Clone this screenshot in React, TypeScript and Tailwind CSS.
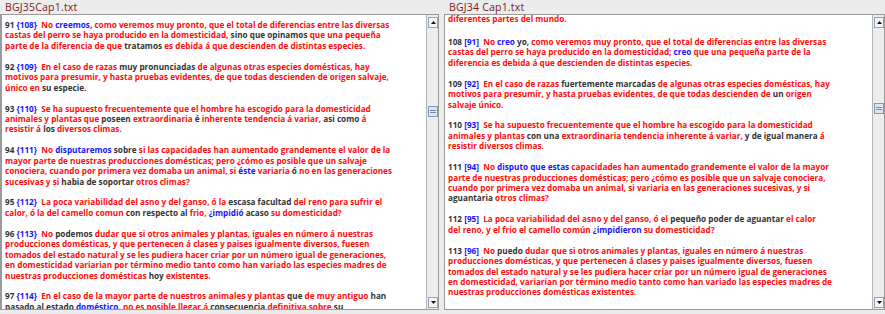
import React from 'react'

// segments separated by "|", first char of each = colour key
const COLORS: Record<string, string> = {
  r: 'text-[#ff0d0d]',
  b: 'text-[#1515ff]',
  d: 'text-[#333333]',
}

const LEFT_LINES = [
  'd91 |b{108}|d  |rNo |bcreemos,|r como veremos muy pronto, que el total de diferencias entre las diversas',
  'rcastas del perro se haya producido en la domesticidad,|d sino que opinamos|r que una pequeña',
  'rparte de la diferencia de que|d tratamos|r es debida á que descienden de distintas especies.',
  '',
  'd92 |b{109}|d  |rEn el caso de razas|d muy pronunciadas|r de algunas otras especies domésticas, hay',
  'rmotivos para presumir, y hasta pruebas evidentes, de que todas descienden de origen salvaje,',
  'rúnico en|d su especie.',
  '',
  'd93 |b{110}|d  |rSe ha supuesto frecuentemente que el hombre ha escogido para la domesticidad',
  'ranimales y plantas que|d poseen|r extraordinaria|d é|r inherente tendencia á variar,|d asi como|r á',
  'rresistir á|d los|r diversos climas.',
  '',
  'd94 |b{111}|d  |rNo|b disputaremos|d sobre|r si las capacidades han aumentado grandemente el valor de la',
  'rmayor parte de nuestras producciones domésticas; pero ¿cómo es posible que un salvaje',
  'rconociera, cuando por primera vez domaba un animal, si|b éste|r variaria|d ó|r no en las generaciones',
  'rsucesivas y si|d habia de soportar|r otros climas?',
  '',
  'd95 |b{112}|d  |rLa poca variabilidad del asno y del ganso, ó la|d escasa facultad|r del reno para sufrir el',
  'rcalor, ó la del camello comun|d con respecto al|r frio,|b ¿impidió|d acaso|r su domesticidad?',
  '',
  'd96 |b{113}|d  |rNo|d podemos|r dudar que si otros animales y plantas, iguales en número á nuestras',
  'rproducciones domésticas, y que pertenecen á clases y paises igualmente diversos, fuesen',
  'rtomados del estado natural y se les pudiera hacer criar por un número igual de generaciones,',
  'ren domesticidad variarian por término medio tanto como han variado las especies madres de',
  'rnuestras producciones domésticas|d hoy|r existentes.',
  '',
  'd97 |b{114}|d  |rEn el caso de la mayor parte de nuestros animales y plantas|d que|r de muy antiguo|d han',
  'dpasado al estado|b doméstico,|r no es posible llegar á|d consecuencia|r definitiva sobre|d su',
]

const RIGHT_LINES = [
  'rdiferentes partes del mundo.',
  '',
  'd108 |b[91]|d  |rNo|b creo|d yo,|r como veremos muy pronto, que el total de diferencias entre las diversas',
  'rcastas del perro se haya producido en la domesticidad;|b creo|r que una pequeña parte de la',
  'rdiferencia es debida á que descienden de distintas especies.',
  '',
  'd109 |b[92]|d  |rEn el caso de razas|d fuertemente marcadas|r de algunas otras especies domésticas, hay',
  'rmotivos para presumir, y hasta pruebas evidentes, de que todas descienden de|d un|r origen',
  'rsalvaje único.',
  '',
  'd110 |b[93]|d  |rSe ha supuesto frecuentemente que el hombre ha escogido para la domesticidad',
  'ranimales y plantas|d con una|r extraordinaria tendencia inherente á variar,|d y de igual manera|r á',
  'rresistir diversos climas.',
  '',
  'd111 |b[94]|d  |rNo|b disputo que estas|r capacidades han aumentado grandemente el valor de la mayor',
  'rparte de nuestras producciones domésticas; pero ¿cómo es posible que un salvaje conociera,',
  'rcuando por primera vez domaba un animal, si variaria en las generaciones sucesivas, y si',
  'daguantaria|r otros climas?',
  '',
  'd112 |b[95]|d  |rLa poca variabilidad del asno y del ganso, ó el|d pequeño poder de aguantar|r el calor',
  'rdel reno, y el frio el camello común|b ¿impidieron|r su domesticidad?',
  '',
  'd113 |b[96]|d  |rNo|d puedo|r dudar que si otros animales y plantas, iguales en número á nuestras',
  'rproducciones domésticas, y que pertenecen á clases y paises igualmente diversos, fuesen',
  'rtomados del estado natural y se les pudiera hacer criar por un número igual de generaciones',
  'ren domesticidad, variarian por término medio tanto como han variado las especies madres de',
  'rnuestras producciones domésticas existentes.',
  '',
  'd114 |b[97]|d  |rEn el caso de la mayor parte de nuestros animales y plantas',
]

function Line({ src, className = '' }: { src: string; className?: string }) {
  return (
    <div className={`h-[10.44px] leading-[10.44px] whitespace-pre ${className}`}>
      {src.split('|').filter(Boolean).map((seg, i) => (
        <span key={i} className={COLORS[seg[0]]}>{seg.slice(1)}</span>
      ))}
    </div>
  )
}

function Arrow({ down }: { down?: boolean }) {
  return (
    <div className="h-[11px] border border-[#8ea2c0] bg-[#f3f5f9] flex items-center justify-center">
      <svg width="5" height="3" viewBox="0 0 5 3">
        <path d={down ? 'M0 0H5L2.5 3Z' : 'M0 3H5L2.5 0Z'} fill="#111" />
      </svg>
    </div>
  )
}

function ScrollBar({ thumbTop }: { thumbTop: string }) {
  return (
    <div className="w-[12px] shrink-0 flex flex-col bg-[#ededed] border-l border-[#b3b3b3] pt-[2px] pb-[1px] pl-px">
      <Arrow />
      <div className={thumbTop} />
      {/* Thumb */}
      <div className="h-[11px] border border-[#7b95bb] bg-[#dce6f4] flex flex-col items-center justify-center gap-px">
        <div className="w-[6px] h-px bg-[#6e88b0]" />
        <div className="w-[6px] h-px bg-[#6e88b0]" />
      </div>
      <div className="flex-1" />
      <Arrow down />
    </div>
  )
}

function Pane({ title, lines, className, padTop, firstLine = '', thumbTop }: {
  title: string
  lines: string[]
  className: string
  padTop: string
  firstLine?: string
  thumbTop: string
}) {
  return (
    <div className={`flex flex-col pb-[4px] ${className}`}>
      <div className="h-[14px] leading-[14px] pl-[5px] text-[10.5px] tracking-[0.2px] text-[#7a1b1b]">{title}</div>
      <div className="flex-1 min-h-0 flex bg-white border border-[#9a9a9a]">
        <div className={`flex-1 min-w-0 overflow-hidden pl-[3px] text-[8.2px] font-bold ${padTop}`}>
          {lines.map((l, i) => <Line key={i} src={l} className={i === 0 ? firstLine : ''} />)}
        </div>
        <ScrollBar thumbTop={thumbTop} />
      </div>
    </div>
  )
}

export default function App() {
  return (
    <div className="w-[885px] h-[314px] bg-[#ececec] flex gap-[5px] overflow-hidden font-['Open_Sans',sans-serif]">
      <Pane
        title="BGJ35Cap1.txt"
        lines={LEFT_LINES}
        className="w-[439px] [&>div:nth-child(2)]:border-l-2"
        padTop="pt-[5px]"
        thumbTop="h-[78px]"
      />
      <Pane
        title="BGJ34 Cap1.txt"
        lines={RIGHT_LINES}
        className="flex-1"
        padTop="pt-px"
        firstLine="-mt-[2.5px] mb-[2.5px]"
        thumbTop="h-[75px]"
      />
    </div>
  )
}
